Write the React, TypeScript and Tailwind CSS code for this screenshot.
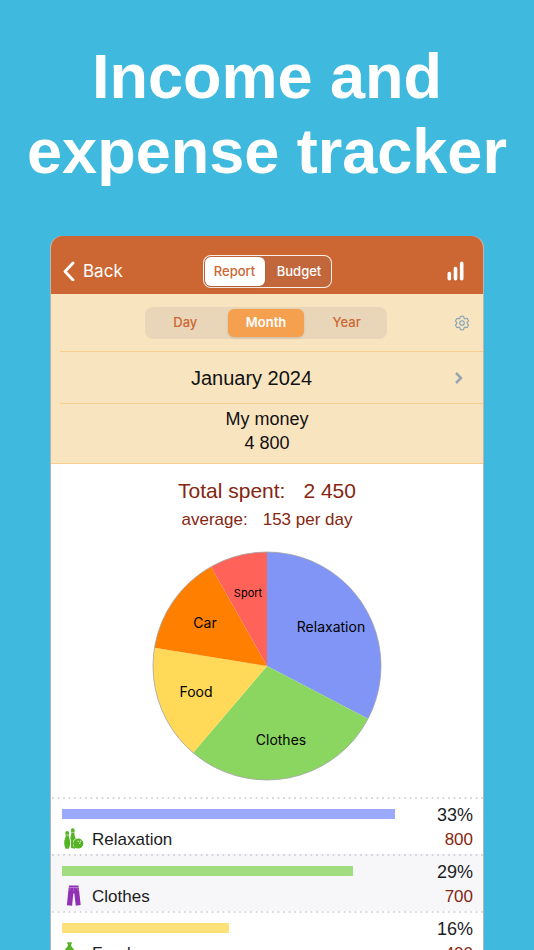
import { useState } from 'react'
import { HiOutlineCog6Tooth } from 'react-icons/hi2'
import type { ReactNode } from 'react'

interface Category {
  id: string
  name: string
  amount: number
  sliceColor: string
  barColor: string
  icon: ReactNode
  labelX: number
  labelY: number
  labelSize: number
}

function BowlingIcon() {
  return (
    <svg viewBox="0 0 22 22" className="block size-[22px]" fill="#55b425" aria-hidden="true">
      <path d="M5.200 3C6.500 3 7.300 4 7.100 5.400 7 6.600 6.500 7.500 6.800 8.800 7.200 10.500 8.200 12 8.200 14.700 8.200 17.200 7.400 19.300 6.800 20.800H3.600C3 19.300 2.200 17.200 2.200 14.700 2.200 12 3.200 10.500 3.600 8.800 3.900 7.500 3.400 6.600 3.300 5.400 3.100 4 3.900 3 5.200 3z" />
      <path d="M10.800.3C12.100.3 12.900 1.300 12.700 2.700 12.600 4 12.100 5 12.400 6.500 12.700 8 13.400 9.300 13.700 10.400 11.600 11.500 10.500 13.300 10.500 15.500 10.500 17.200 11.200 18.700 12.200 19.700 11.600 20.300 9.700 20.300 9 19.600 9.400 17.500 9.500 15.500 9.100 13.200 8.800 11.800 8.300 11 8.400 9.800 8.600 8.500 9.100 7.600 9.200 6.500 9.400 5 9 4 8.900 2.700 8.700 1.300 9.500.3 10.800.3z" />
      <ellipse cx="16.200" cy="15.600" rx="5.100" ry="5" />
      <path d="M10 13v5.500l3 1.700" fill="none" stroke="#55b425" strokeWidth="1.800" />
      <path d="M3.500 7h3.400M9 4.300h3.600" stroke="#d8efca" strokeWidth=".7" />
      <g fill="#d8efca">
        <circle cx="16.200" cy="13.300" r=".7" />
        <circle cx="18.600" cy="13.200" r=".7" />
        <circle cx="17.800" cy="15.300" r=".7" />
      </g>
    </svg>
  )
}

function TrousersIcon() {
  return (
    <svg viewBox="0 0 22 22" className="block size-[22px]" fill="#9130b5" aria-hidden="true">
      <path d="M7 .6h9.400l.3 1.800h-10z" />
      <path d="M6.600 2.700h10.200l1.900 17.400-4.900.6L12.300 8.400h-1L10.100 20.700 4.900 20.200z" />
      <path d="M8.400 2.900C8.400 4.400 7.700 5.200 6.500 5.500M15 2.900c0 1.500.7 2.300 1.900 2.600M11.700 3v3.400" fill="none" stroke="#cf9ddf" strokeWidth=".5" />
    </svg>
  )
}

function BottleIcon() {
  return (
    <svg viewBox="0 0 22 22" className="block size-[22px]" fill="#55b425" aria-hidden="true">
      <path d="M5.300.3h4.400v1.600H9.200V3.600C9.200 5 11.800 6.400 12.400 9v10c0 1-.6 1.700-1.600 1.700H4.200c-1 0-1.600-.7-1.600-1.700V9C3.200 6.400 5.800 5 5.800 3.600V1.900H5.300z" />
    </svg>
  )
}

const categories: Category[] = [
  { id: 'relaxation', name: 'Relaxation', amount: 800, sliceColor: '#8195f7', barColor: '#9aa9f9', icon: <BowlingIcon />, labelX: 179, labelY: 81, labelSize: 14 },
  { id: 'clothes', name: 'Clothes', amount: 700, sliceColor: '#8ad660', barColor: '#a1dd80', icon: <TrousersIcon />, labelX: 129, labelY: 194, labelSize: 14 },
  { id: 'food', name: 'Food', amount: 400, sliceColor: '#ffd957', barColor: '#ffe079', icon: <BottleIcon />, labelX: 44, labelY: 146, labelSize: 14 },
  { id: 'car', name: 'Car', amount: 350, sliceColor: '#ff8000', barColor: '#ff9933', icon: null, labelX: 53, labelY: 77, labelSize: 14 },
  { id: 'sport', name: 'Sport', amount: 200, sliceColor: '#ff6259', barColor: '#ff817a', icon: null, labelX: 96, labelY: 46, labelSize: 11 },
]

const total = categories.reduce((sum, c) => sum + c.amount, 0)
const highest = Math.max(...categories.map((c) => c.amount))
const topCategories = categories.slice(0, 3)
const periods = ['Day', 'Month', 'Year']

function point(share: number) {
  const angle = share * 2 * Math.PI
  return `${(115 + 114 * Math.sin(angle)).toFixed(2)} ${(115 - 114 * Math.cos(angle)).toFixed(2)}`
}

function PieChart() {
  let start = 0
  return (
    <svg viewBox="0 0 230 230" className="mx-auto block w-[230px]" role="img" aria-label="Spending by category">
      {categories.map((c) => {
        const from = point(start / total)
        start += c.amount
        return <path key={c.id} d={`M115 115L${from}A114 114 0 0 1 ${point(start / total)}Z`} fill={c.sliceColor} />
      })}
      <circle cx="115" cy="115" r="114" fill="none" stroke="#a3a3a8" strokeWidth=".8" />
      {categories.map((c) => (
        <text key={c.id} x={c.labelX} y={c.labelY} fontSize={c.labelSize} textAnchor="middle" className="fill-black font-[Inter,sans-serif]">
          {c.name}
        </text>
      ))}
    </svg>
  )
}

function DottedLine() {
  return (
    <svg className="block h-[2px] w-full" aria-hidden="true">
      <line x1="2" y1="1" x2="100%" y2="1" stroke="#ced0d6" strokeWidth="2" strokeLinecap="round" strokeDasharray="0 5.5" />
    </svg>
  )
}

function CategoryRow({ category, shaded }: { category: Category; shaded: boolean }) {
  return (
    <li className={shaded ? 'bg-[#f7f7fa]' : 'bg-white'}>
      <DottedLine />
      <div className="flex h-[55px] flex-col pt-1 pr-[10px] pl-[11px] text-lg leading-6">
        <div className="flex items-center">
          <div className="flex-1 pb-[2px]">
            <div className="h-[10px]" style={{ width: `${(category.amount / highest) * 100}%`, backgroundColor: category.barColor }} />
          </div>
          <span className="w-[78px] text-right text-[#1c1c1e]">{Math.round((category.amount / total) * 100)}%</span>
        </div>
        <div className="mt-px flex items-start">
          <span className="w-[30px]">{category.icon}</span>
          <span className="flex-1 text-[17px] text-[#1c1c1e]">{category.name}</span>
          <span className="text-[17px] text-[#85260f]">{category.amount}</span>
        </div>
      </div>
    </li>
  )
}

export default function App() {
  const [view, setView] = useState('Report')
  const [period, setPeriod] = useState('Month')

  return (
    <div className="flex h-screen flex-col overflow-hidden bg-[#40b9de] px-[50px] font-['Liberation_Sans',Arial,sans-serif]">
      <h1 className="-mx-[50px] mt-[39px] text-center text-[63px] leading-[75px] font-bold text-white">
        Income and
        <br />
        expense tracker
      </h1>

      <main className="mt-[47px] min-h-0 flex-1 overflow-hidden rounded-t-xl border-x border-[#b5b5b5] bg-white">
        {/* Navigation bar */}
        <header className="-mx-px grid h-[58px] grid-cols-[1fr_auto_1fr] items-center bg-[#cc6632] px-3 pt-3 font-[Inter,sans-serif]">
          <button className="flex items-center gap-2 text-[17px] text-white">
            <svg viewBox="0 0 13 20" className="h-5 w-[13px]" fill="none" stroke="currentColor" strokeWidth="2.800" strokeLinecap="round" strokeLinejoin="round" aria-hidden="true">
              <path d="M11 2 3 10.500 11 19" />
            </svg>
            <span className="pt-[2px]">Back</span>
          </button>
          <div className="flex h-[33px] w-[129px] rounded-lg border border-white/90 bg-[#c2673c] p-px text-[13px] font-medium">
            {['Report', 'Budget'].map((name) => (
              <button
                key={name}
                onClick={() => setView(name)}
                className={view === name ? 'w-[60px] rounded-md bg-white pt-[2px] text-[#cc6632] shadow' : 'flex-1 pt-[2px] pl-1 text-white'}
              >
                {name}
              </button>
            ))}
          </div>
          <button className="mr-2 justify-self-end text-white" aria-label="Charts">
            <svg viewBox="0 0 17 20" className="h-5 w-[17px]" stroke="currentColor" strokeWidth="3.600" strokeLinecap="round">
              <path d="M2.300 12.600v5.200M8.500 7.600v10.200M14.700 2.400v15.400" />
            </svg>
          </button>
        </header>

        {/* Period */}
        <section className="border-b border-[#f7cd90] bg-[#f9e4c0]">
          <div className="grid h-[57px] grid-cols-[1fr_auto_1fr] items-center pr-3 pl-[10px]">
            <div className="col-start-2 grid h-8 w-[242px] grid-cols-3 rounded-lg bg-[#e9d6b9] py-[2px] font-[Inter,sans-serif] text-[13px] font-medium">
              {periods.map((name) => (
                <button
                  key={name}
                  onClick={() => setPeriod(name)}
                  className={period === name ? 'mx-[2px] rounded-md bg-[#f4a04f] font-semibold text-white shadow' : 'text-[#cc6632]'}
                >
                  {name}
                </button>
              ))}
            </div>
            <button className="justify-self-end text-[#7fa3b8]" aria-label="Settings">
              <HiOutlineCog6Tooth size={18} />
            </button>
          </div>
          <button className="ml-[9px] flex h-[53px] w-[calc(100%-9px)] items-center gap-3 border-y border-[#f7cd90] pr-5 text-xl text-[#111]">
            <span className="flex-1">January 2024</span>
            <svg viewBox="0 0 8 12" className="h-3 w-2" fill="none" stroke="#98a3b3" strokeWidth="2.500" aria-hidden="true">
              <path d="M1 1l5 5-5 5" />
            </svg>
          </button>
          <div className="h-[59px] pt-[3px] text-center text-lg leading-6 text-[#111]">
            <p>My money</p>
            <p>4 800</p>
          </div>
        </section>

        <section className="pt-3 pb-4 text-center text-[#85260f]">
          <p className="text-[21px] leading-[30px]">
            Total spent:<span className="ml-[18px]">2 450</span>
          </p>
          <p className="mb-[17px] text-[17px] leading-7">
            average:<span className="ml-[15px]">153 per day</span>
          </p>
          <PieChart />
        </section>

        <ul>
          {topCategories.map((c, i) => (
            <CategoryRow key={c.id} category={c} shaded={i % 2 === 1} />
          ))}
        </ul>
      </main>
    </div>
  )
}
